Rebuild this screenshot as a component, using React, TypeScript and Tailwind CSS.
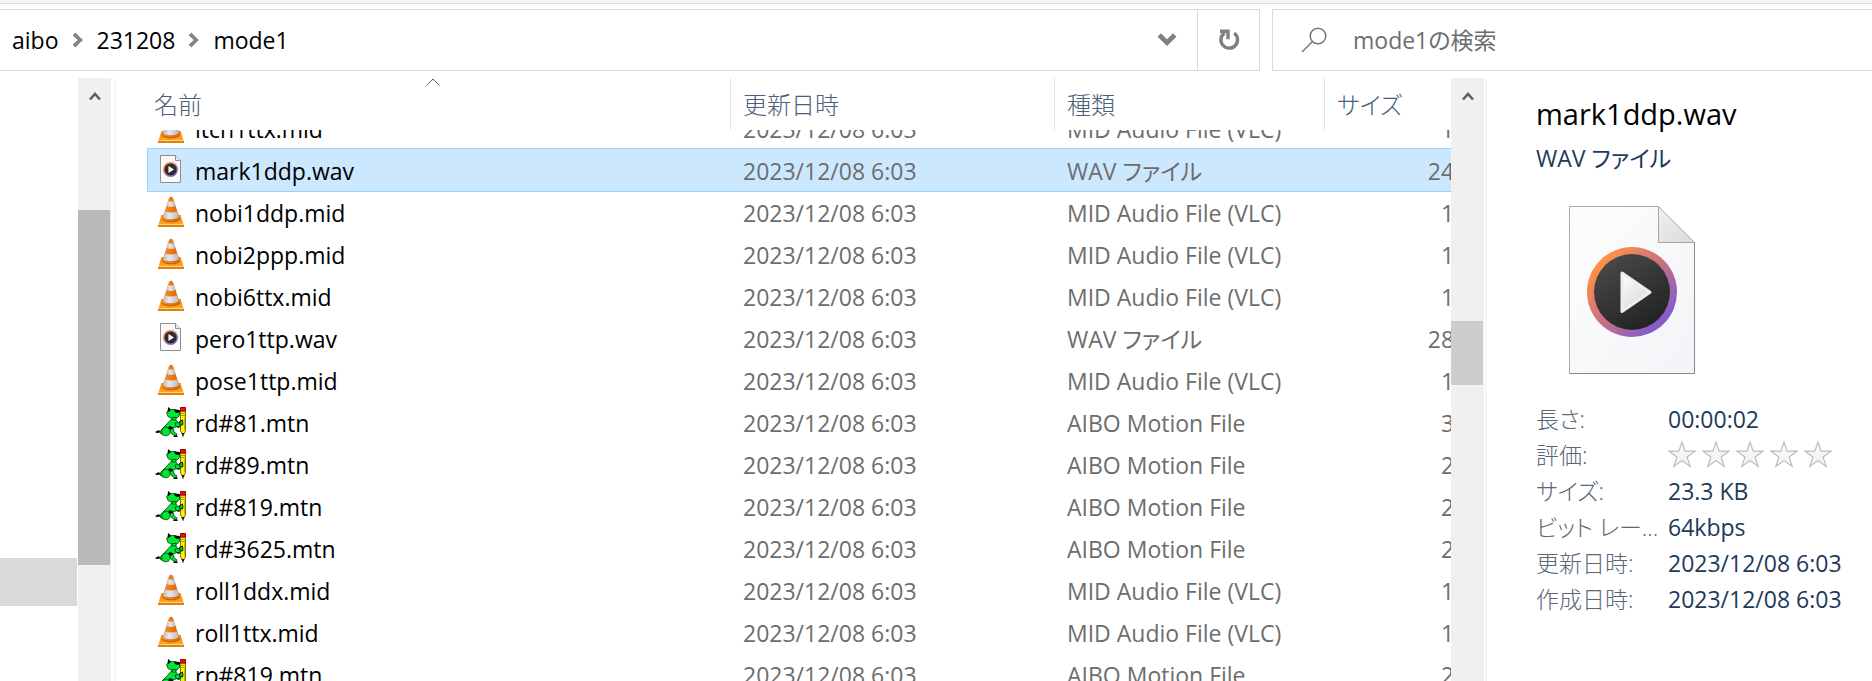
import { useState } from "react";

type Kind = "mid" | "wav" | "mtn";

const KIND_LABEL: Record<Kind, string> = {
  mid: "MID Audio File (VLC)",
  wav: "WAV ファイル",
  mtn: "AIBO Motion File",
};

const FILES: { name: string; kind: Kind; size: string }[] = [
  { name: "itch1ttx.mid", kind: "mid", size: "1 KB" },
  { name: "mark1ddp.wav", kind: "wav", size: "24 KB" },
  { name: "nobi1ddp.mid", kind: "mid", size: "1 KB" },
  { name: "nobi2ppp.mid", kind: "mid", size: "1 KB" },
  { name: "nobi6ttx.mid", kind: "mid", size: "1 KB" },
  { name: "pero1ttp.wav", kind: "wav", size: "28 KB" },
  { name: "pose1ttp.mid", kind: "mid", size: "1 KB" },
  { name: "rd#81.mtn", kind: "mtn", size: "3 KB" },
  { name: "rd#89.mtn", kind: "mtn", size: "2 KB" },
  { name: "rd#819.mtn", kind: "mtn", size: "2 KB" },
  { name: "rd#3625.mtn", kind: "mtn", size: "2 KB" },
  { name: "roll1ddx.mid", kind: "mid", size: "1 KB" },
  { name: "roll1ttx.mid", kind: "mid", size: "1 KB" },
  { name: "rp#819.mtn", kind: "mtn", size: "2 KB" },
];

function ConeIcon() {
  return (
    <svg viewBox="0 0 32 32" className="size-8" aria-hidden="true">
      <defs>
        <linearGradient id="coneBase" x1="0" y1="0" x2="0" y2="1">
          <stop offset="0" stopColor="#ee7f0c" />
          <stop offset="1" stopColor="#ffae2b" />
        </linearGradient>
        <linearGradient id="coneBody" x1="0" y1="0" x2="1" y2="0">
          <stop offset="0" stopColor="#f2923a" />
          <stop offset="0.45" stopColor="#f07c12" />
          <stop offset="1" stopColor="#d26208" />
        </linearGradient>
        <linearGradient id="coneWhite" x1="0" y1="0" x2="1" y2="0">
          <stop offset="0" stopColor="#b9bec5" />
          <stop offset="0.4" stopColor="#e6e8eb" />
          <stop offset="1" stopColor="#b4b8bd" />
        </linearGradient>
      </defs>
      <path d="M6.500 19h19L29 30H3z" fill="url(#coneBase)" />
      <path d="M3 29h26v2H3z" fill="#df8208" />
      <path d="M3.500 28.500h25" stroke="#ffd27a" />
      <path d="M7 23c1 4.500 17 4.500 18 0l-2-4H9z" fill="#cf6506" />
      <path d="M14 2q2-2.500 4 0l6.500 20c-1 4-16 4-17 0z" fill="url(#coneBody)" />
      <path d="M13.200 5q2.800 1.200 5.600 0l1.700 5q-4.500 1.800-9 0z" fill="url(#coneWhite)" />
      <path d="M10 15.500q6 2.200 12 0l1.800 5.500c-2 3-13.600 3-15.600 0z" fill="url(#coneWhite)" />
    </svg>
  );
}

function MediaPage({ className }: { className: string }) {
  return (
    <svg viewBox="0 0 126 168" className={className} aria-hidden="true">
      <defs>
        <linearGradient id="pageFill" x1="0" y1="0" x2="1" y2="1">
          <stop offset="0" stopColor="#fcfdfd" />
          <stop offset="1" stopColor="#f2f4f7" />
        </linearGradient>
        <linearGradient id="foldFill" x1="0" y1="0" x2="1" y2="1">
          <stop offset="0" stopColor="#f1f1f1" />
          <stop offset="1" stopColor="#d9d9d9" />
        </linearGradient>
        <linearGradient id="ringFill" x1="0.150" y1="0.150" x2="0.850" y2="0.850">
          <stop offset="0" stopColor="#ff9248" />
          <stop offset="0.500" stopColor="#c97081" />
          <stop offset="1" stopColor="#7f5cd0" />
        </linearGradient>
        <linearGradient id="discFill" x1="0.200" y1="0" x2="0.800" y2="1">
          <stop offset="0" stopColor="#4a4a4a" />
          <stop offset="1" stopColor="#202020" />
        </linearGradient>
        <linearGradient id="playFill" x1="0" y1="0" x2="0.700" y2="1">
          <stop offset="0" stopColor="#ffffff" />
          <stop offset="1" stopColor="#d8d8d8" />
        </linearGradient>
      </defs>
      <path d="M.5.5H89.500L125.500 36.500V167.500H.5z" fill="url(#pageFill)" stroke="#a8acae" />
      <path d="M.5 167.500h125V36.500" fill="none" stroke="#85898b" />
      <path d="M89.500.5v36h36z" fill="url(#foldFill)" stroke="#a5a7a8" />
      <circle cx="63" cy="86" r="45" fill="url(#ringFill)" />
      <circle cx="63" cy="86" r="38" fill="url(#discFill)" />
      <path d="M53 67v38.500l28-19.200z" fill="url(#playFill)" stroke="#eeeeee" strokeWidth="3" strokeLinejoin="round" />
    </svg>
  );
}

function SmallPage() {
  return (
    <svg viewBox="0 0 32 32" className="size-8" aria-hidden="true">
      <path d="M5.500 1.500h15l5 5v22h-20z" fill="#fafafa" stroke="#8c9093" />
      <path d="M20.500 1.500v5h5" fill="#ececec" stroke="#8c9093" />
      <circle cx="15.500" cy="15.500" r="7.500" fill="url(#ringFill)" />
      <circle cx="15.500" cy="15.500" r="6" fill="#2c2c2c" />
      <path d="M13.500 12v7l5.500-3.500z" fill="#fff" />
    </svg>
  );
}

function MotionIcon() {
  return (
    <svg viewBox="-1 0 32 32" className="size-8" aria-hidden="true">
      <g fill="#00e632" stroke="#04400c" strokeWidth=".8" strokeLinejoin="round">
        <path d="M15 13.500l4.500 0 2.500 3-1 4-5 2-4 5-5 1.500-3-2 1-3 5-5z" />
        <path d="M10.500 6.500l3.500-3 5 0 4.500 2 0 4-2.500 2.500-5 .5-4-2z" />
        <path d="M16 11.500h4v2.500h-4z" />
        <path d="M19 17l4-.5 2.500-3 2 1v4l-3.500 2.500-4-.5z" />
        <circle cx="10" cy="25.500" r="4.300" />
        <path d="M15 22l2.500 1 .5 3 3 2-1 2-4-2-2-3z" />
      </g>
      <path d="M12 1l2 1.500.5 2-3 2zM18.500 3.500l5 .5 1 2-3.500 1-2.500-1.500zM13.500 20l3 1 .5 2-3 .5-2-1.500zM22 20l2 .8-1 1-2-.5zM-1 26l4-2 1.500 2.500-4 .5zM17.500 29.500h4V31h-4z" fill="#000" />
      <path d="M24.500 5h5v20l-2.500 4-2.500-4z" fill="#fff200" stroke="#5c5300" strokeWidth=".8" />
      <path d="M28.500 11v13" stroke="#c9bd00" />
      <path d="M24.500 1.500h5V5h-5z" fill="#f01010" stroke="#a00000" />
      <path d="M24.500 7.500h5M24.500 9.500h5" stroke="#8a7c00" strokeWidth=".7" />
      <path d="M25.500 27h3l-1.500 4.500z" fill="#1d1906" />
      <path d="M23.500 15.500l3-1.500.5 4.500-3 1z" fill="#00c82b" stroke="#000" strokeWidth=".8" />
    </svg>
  );
}

function FileIcon({ kind }: { kind: Kind }) {
  if (kind === "mid") return <ConeIcon />;
  if (kind === "wav") return <SmallPage />;
  return <MotionIcon />;
}

function BoldChevron({ className }: { className: string }) {
  return (
    <svg viewBox="0 0 16 16" className={className} fill="none" stroke="currentColor" strokeWidth="3.800" aria-hidden="true">
      <path d="M4 1.800L10.200 8 4 14.200" />
    </svg>
  );
}

function ScrollUp() {
  return (
    <button type="button" aria-label="上へスクロール" className="flex h-9 w-full items-center justify-center text-[#606060]">
      <svg viewBox="0 0 12 10" className="h-[10px] w-3" fill="none" stroke="currentColor" strokeWidth="2.600" aria-hidden="true">
        <path d="M1 8.500L6 3l5 5.500" />
      </svg>
    </button>
  );
}

function Rating() {
  return (
    <span className="flex gap-[6px]" role="img" aria-label="評価なし">
      {[1, 2, 3, 4, 5].map((n) => (
        <svg key={n} viewBox="0 0 28 28" className="size-7" fill="#f5f5f5" stroke="#bdbdbd" strokeWidth="1.200" aria-hidden="true">
          <path d="M14 1l3.200 9.200H27l-7.900 5.700 3.100 9.600L14 19.600l-8.200 5.900 3.100-9.600L1 10.200h9.800z" />
        </svg>
      ))}
    </span>
  );
}

const DETAILS: [string, React.ReactNode][] = [
  ["長さ:", "00:00:02"],
  ["評価:", <Rating key="rating" />],
  ["サイズ:", "23.3 KB"],
  ["ビット レート:", "64kbps"],
  ["更新日時:", "2023/12/08 6:03"],
  ["作成日時:", "2023/12/08 6:03"],
];

export default function App() {
  const [selected, setSelected] = useState("mark1ddp.wav");

  return (
    <div className="flex h-screen flex-col overflow-hidden bg-white font-['Open_Sans','Noto_Sans_CJK_JP',sans-serif] text-[23px] leading-8 text-black [font-feature-settings:'palt']">
      <div className="h-1 shrink-0 border-b border-[#d9dbde] bg-[#f3f4f8]" />

      <header className="mt-[5px] flex h-[62px] shrink-0 gap-3">
        <div className="flex min-w-0 flex-1 border-y border-r border-[#d9d9d9]">
          <nav aria-label="パス" className="flex flex-1 items-center pl-3">
            <a href="#aibo">aibo</a>
            <BoldChevron className="mx-[11px] size-4 text-[#858585]" />
            <a href="#231208">231208</a>
            <BoldChevron className="mx-[11px] size-4 text-[#858585]" />
            <a href="#mode1">mode1</a>
          </nav>
          <button type="button" aria-label="以前の場所" className="flex w-[60px] items-center justify-center">
            <BoldChevron className="size-5 rotate-90 text-[#808080]" />
          </button>
          <button type="button" aria-label="最新の情報に更新" className="flex w-[62px] items-center justify-center border-l border-[#d9d9d9] text-[#808080]">
            <svg viewBox="0 0 24 24" className="size-6" fill="none" stroke="currentColor" strokeWidth="3.400" aria-hidden="true">
              <path d="M17.200 5.200A8.300 8.300 0 1 1 7.500 5" />
              <path d="M3 3.200h8v8" />
            </svg>
          </button>
        </div>
        <label className="flex w-[600px] shrink-0 items-center border-y border-l border-[#d9d9d9] pl-7">
          <svg viewBox="0 0 26 26" className="size-[26px] shrink-0" fill="none" stroke="#757575" strokeWidth="1.500" aria-hidden="true">
            <circle cx="17" cy="9" r="7.800" />
            <path d="M11.500 14.500L1 25" />
          </svg>
          <input
            type="search"
            aria-label="検索"
            placeholder="mode1の検索"
            className="ml-[26px] min-w-0 flex-1 bg-transparent outline-none placeholder:text-[#6d6d6d]"
          />
        </label>
      </header>

      <div className="mt-[7px] flex min-h-0 flex-1">
        <aside className="flex w-[78px] shrink-0 flex-col">
          <div className="mt-[480px] h-12 w-[77px] shrink-0 bg-[#d9d9d9]" />
        </aside>
        <div className="w-[33px] shrink-0 bg-[#f0f0f0]">
          <ScrollUp />
          <div className="mt-24 h-[355px] w-8 bg-[#b9b9b9]" />
        </div>
        <div className="ml-[3px] w-[2px] shrink-0 bg-[#f5f5f5]" />

        <main className="min-w-0 flex-1 overflow-hidden pl-[31px]">
          <table className="w-full table-fixed border-separate border-spacing-0 text-left">
            <colgroup>
              <col className="w-[584px]" />
              <col className="w-[324px]" />
              <col className="w-[270px]" />
              <col />
            </colgroup>
            <thead className="text-[24px] text-[#4c607a]">
              <tr className="h-[52px]">
                <th className="relative border-r border-[#e5e5e5] p-0 pt-[2px] pl-[7px] font-light">
                  名前
                  <svg viewBox="0 0 14 8" className="absolute top-0 left-[49%] h-2 w-[14px] -translate-x-1/2" fill="none" stroke="#606060" aria-hidden="true">
                    <path d="M.5 7.500L7 1l6.500 6.500" />
                  </svg>
                </th>
                <th className="border-r border-[#e5e5e5] p-0 pt-[2px] pl-3 font-light">更新日時</th>
                <th className="border-r border-[#e5e5e5] p-0 pt-[2px] pl-3 font-light">種類</th>
                <th className="p-0 pt-[2px] pl-3 font-light">サイズ</th>
              </tr>
            </thead>
          </table>
          <div className="overflow-hidden">
            <table className="-mt-6 w-full table-fixed border-separate border-spacing-0 text-[#6d6d6d]">
              <colgroup>
                <col className="w-[584px]" />
                <col className="w-[324px]" />
                <col className="w-[270px]" />
                <col />
              </colgroup>
              <tbody>
                {FILES.map((f) => {
                  const on = f.name === selected;
                  const edge = on
                    ? "border-t border-[#99d1ff] bg-[#cce8ff] shadow-[0_1px_0_#cce8ff,0_2px_0_#99d1ff]"
                    : "border-t border-transparent";
                  return (
                    <tr key={f.name} aria-selected={on} onClick={() => setSelected(f.name)} className="h-[42px]">
                      <td className={`${edge} border-l p-0`}>
                        <div className="flex items-center gap-2 pl-[7px] text-black">
                          <FileIcon kind={f.kind} />
                          <span className="pt-[2px]">{f.name}</span>
                        </div>
                      </td>
                      <td className={`${edge} p-0 pt-[2px] pl-3`}>2023/12/08 6:03</td>
                      <td className={`${edge} p-0 pt-[2px] pl-3`}>{KIND_LABEL[f.kind]}</td>
                      <td className={`${edge} p-0 pt-[2px]`}>
                        <div className="-mr-[38px] text-right whitespace-nowrap">{f.size}</div>
                      </td>
                    </tr>
                  );
                })}
              </tbody>
            </table>
          </div>
        </main>

        <div className="w-[33px] shrink-0 bg-[#f0f0f0]">
          <ScrollUp />
          <div className="mt-[207px] h-16 w-8 bg-[#cdcdcd]" />
        </div>
        <div className="ml-px w-[2px] shrink-0 bg-[#f5f5f5]" />

        <section aria-label="詳細" className="w-[385px] shrink-0 pt-4 pl-[49px] text-[#1e395b]">
          <h1 className="text-[29px] leading-10 text-black">mark1ddp.wav</h1>
          <p className="mt-2">WAV ファイル</p>
          <MediaPage className="mt-8 ml-[33px] h-[168px] w-[126px]" />
          <dl className="mt-[27px] grid grid-cols-[124px_1fr] gap-x-2 leading-9">
            {DETAILS.map(([term, value]) => (
              <div key={term} className="col-span-2 grid h-9 grid-cols-subgrid items-center">
                <dt className="truncate font-light text-[#5a6779]">{term}</dt>
                <dd className="whitespace-nowrap">{value}</dd>
              </div>
            ))}
          </dl>
        </section>
      </div>
    </div>
  );
}
